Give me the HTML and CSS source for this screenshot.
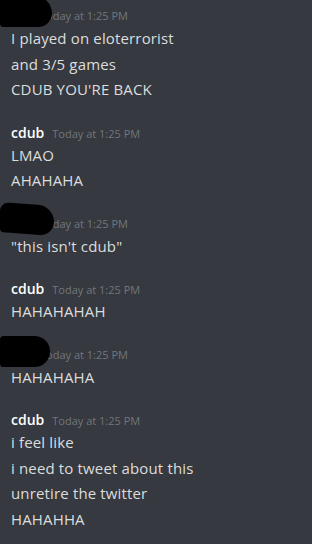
FILE: index.html
```html
<!DOCTYPE html>
<html lang="en">
  <head>
    <meta charset="UTF-8" />
    <meta name="viewport" content="width=device-width, initial-scale=1.0" />
    <title>Chat</title>
    <link rel="stylesheet" href="styles.css">
  </head>
  <body>
    <div class="chat">
      <div class="group">
        <div class="header">
          <span class="name hidden-name"></span>
          <span class="time">Today at 1:25 PM</span>
          <div class="scribble s1"></div>
        </div>
        <div class="msg">I played on eloterrorist</div>
        <div class="msg">and 3/5 games</div>
        <div class="msg">CDUB YOU'RE BACK</div>
      </div>

      <div class="group">
        <div class="header">
          <span class="name">cdub</span>
          <span class="time">Today at 1:25 PM</span>
        </div>
        <div class="msg">LMAO</div>
        <div class="msg">AHAHAHA</div>
      </div>

      <div class="group">
        <div class="header">
          <span class="name hidden-name"></span>
          <span class="time">Today at 1:25 PM</span>
          <div class="scribble s2"></div>
        </div>
        <div class="msg">"this isn't cdub"</div>
      </div>

      <div class="group">
        <div class="header">
          <span class="name">cdub</span>
          <span class="time">Today at 1:25 PM</span>
        </div>
        <div class="msg">HAHAHAHAH</div>
      </div>

      <div class="group">
        <div class="header">
          <span class="name hidden-name"></span>
          <span class="time">Today at 1:25 PM</span>
          <div class="scribble s3"></div>
        </div>
        <div class="msg">HAHAHAHA</div>
      </div>

      <div class="group">
        <div class="header">
          <span class="name">cdub</span>
          <span class="time">Today at 1:25 PM</span>
        </div>
        <div class="msg">i feel like</div>
        <div class="msg">i need to tweet about this</div>
        <div class="msg">unretire the twitter</div>
        <div class="msg">HAHAHHA</div>
      </div>
    </div>
  </body>
</html>
```

FILE: styles.css
```css
html,
body {
  margin: 0;
  height: 100%;
  background-color: #36393f;
}

body {
  font-family: "Open Sans", "Noto Sans", sans-serif;
  color: #dcddde;
  overflow: hidden;
}

.chat {
  padding: 6px 0 0 11px;
}

.group {
  margin-bottom: 20px;
}

.header {
  position: relative;
  display: flex;
  align-items: baseline;
  gap: 8px;
  height: 20px;
  line-height: 20px;
}

.name {
  font-size: 14px;
  font-weight: 600;
  color: #ffffff;
}

.hidden-name {
  display: inline-block;
  width: 21px;
}

.time {
  font-size: 11px;
  color: #72767d;
}

.msg {
  font-size: 15px;
  letter-spacing: 0.15px;
  line-height: 25.5px;
}

/* marker blots over the hidden names */
.scribble {
  position: absolute;
  background: #000;
}

.s1 {
  left: -11px;
  top: -10px;
  width: 52px;
  height: 31px;
  border-radius: 4px 20px 16px 4px;
}

.s2 {
  left: -11px;
  top: -10px;
  width: 54px;
  height: 30px;
  border-radius: 10px 18px 16px 4px;
  transform: skewY(4deg);
}

.s3 {
  left: -11px;
  top: -9px;
  width: 50px;
  height: 31px;
  border-radius: 4px 16px 16px 4px;
}
```
